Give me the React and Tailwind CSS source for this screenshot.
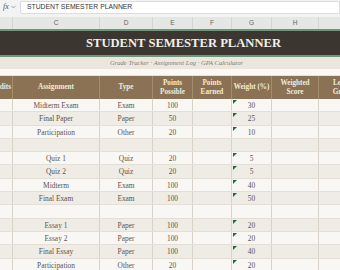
import React from 'react';

const colW = ['w-[40px]', 'w-[87px]', 'w-[53px]', 'w-[40px]', 'w-[39px]', 'w-[40px]', 'w-[47px]', 'w-[48px]'];
const letters = ['B', 'C', 'D', 'E', 'F', 'G', 'H', 'I'];

const headers = ['Credits', 'Assignment', 'Type', 'Points\nPossible', 'Points\nEarned', 'Weight (%)', 'Weighted\nScore', 'Letter\nGrade'];

const rows = [
  ['Midterm Exam', 'Exam', '100', '', '30'],
  ['Final Paper', 'Paper', '50', '', '25'],
  ['Participation', 'Other', '20', '', '10'],
  null,
  ['Quiz 1', 'Quiz', '20', '', '5'],
  ['Quiz 2', 'Quiz', '20', '', '5'],
  ['Midterm', 'Exam', '100', '', '40'],
  ['Final Exam', 'Exam', '100', '', '50'],
  null,
  ['Essay 1', 'Paper', '100', '', '20'],
  ['Essay 2', 'Paper', '100', '', '20'],
  ['Final Essay', 'Paper', '100', '', '40'],
  ['Participation', 'Other', '20', '', '20'],
];

const serif = { fontFamily: '"Liberation Serif", "Times New Roman", serif' };

export default function App() {
  return (
    <div className="w-[340px] h-[270px] overflow-hidden bg-white">
      {/* formula bar */}
      <div className="h-[14px] flex items-center bg-[#f3f3f3]">
        <div className="w-[20px] flex items-center gap-[2px] pl-[3px] text-[#555]">
          <span className="italic text-[8px] leading-none" style={serif}>fx</span>
          <svg width="5" height="4" viewBox="0 0 5 4"><path d="M0.5 0.8 L2.5 3 L4.5 0.8" fill="none" stroke="#888" strokeWidth="0.7" /></svg>
        </div>
        <div className="flex-1 h-[13px] bg-white border border-[#dcdcdc] rounded-l-[2px] flex items-center pl-[6px] text-[6.8px] text-[#333] font-['Liberation_Sans',Arial,sans-serif]">
          STUDENT SEMESTER PLANNER
        </div>
      </div>
      <div className="h-[3px] bg-[#f3f3f3]" />

      <div className="ml-[-27px] w-[394px]">
        {/* column letters */}
        <div className="flex h-[12px] bg-[#e4e7e4]">
          {letters.map((l, i) => (
            <div key={l} className={`${colW[i]} shrink-0 border-r border-[#d2d6d2] flex items-center justify-center text-[6.5px] text-[#666] font-['Liberation_Sans',Arial,sans-serif]`}>
              {l}
            </div>
          ))}
        </div>

        {/* title */}
        <div className="h-[28px] border-y-2 border-[#6f957a] bg-[#3b3630] flex items-center justify-center pl-[27px]">
          <span className="text-[12.6px] font-bold text-[#f4efe6]" style={serif}>STUDENT SEMESTER PLANNER</span>
        </div>

        {/* subtitle */}
        <div className="h-[12px] bg-[#ebe7df] flex items-center justify-center pl-[13px]">
          <span className="italic text-[6.6px] text-[#857b6d]" style={serif}>Grade Tracker · Assignment Log · GPA Calculator</span>
        </div>
        <div className="h-[7px] bg-[#faf9f6] border-b border-[#e6e1d9]" />

        {/* header row */}
        <div className="flex h-[23px] bg-[#8b7254]">
          {headers.map((h, i) => (
            <div
              key={i}
              className={`${colW[i]} shrink-0 border-r border-[#a38d6f] flex items-center text-center font-bold text-[7.2px] leading-[8.5px] text-[#f3ead9] whitespace-pre ${i === 0 ? 'justify-end pr-[1px]' : 'justify-center'}`}
              style={serif}
            >
              {h}
            </div>
          ))}
        </div>

        {/* data rows */}
        {rows.map((r, ri) => {
          const cells = ['', ...(r || ['', '', '', '', '']), '', ''];
          return (
            <div key={ri} className={`flex h-[13.3px] border-b border-[#e3ded6] ${ri % 2 === 0 ? 'bg-[#f9f7f3]' : 'bg-[#efebe5]'}`}>
              {cells.map((c, ci) => (
                <div
                  key={ci}
                  className={`${colW[ci]} shrink-0 relative border-r border-[#d8d2c9] flex items-center justify-center pt-[1px] text-[7.4px] text-[#5b554e] leading-none`}
                  style={serif}
                >
                  {ci === 5 && r && (
                    <svg className="absolute left-[1px] top-[1px]" width="4" height="4" viewBox="0 0 4 4">
                      <path d="M0 0 H4 L0 4 Z" fill="#1f6b3a" />
                    </svg>
                  )}
                  {c}
                </div>
              ))}
            </div>
          );
        })}
      </div>
    </div>
  );
}
